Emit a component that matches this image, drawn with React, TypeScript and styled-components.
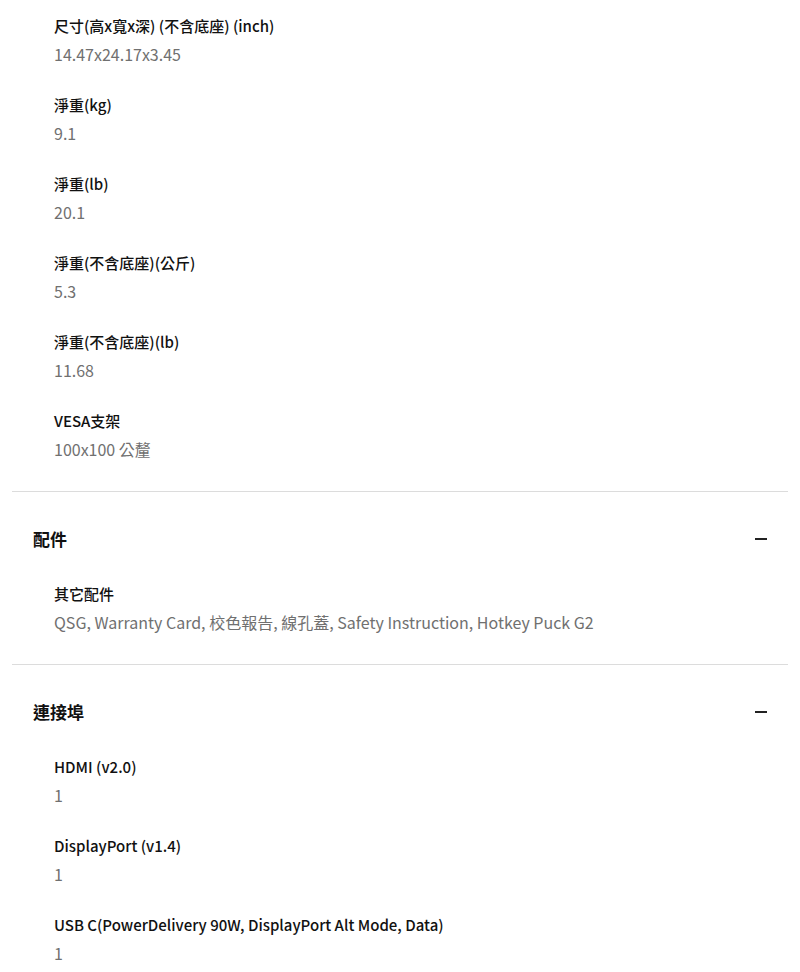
import React from "react";
import styled, { createGlobalStyle } from "styled-components";

const GlobalStyle = createGlobalStyle`
  body {
    margin: 0;
    background: #fff;
    font-family: "Noto Sans CJK TC", "Noto Sans", sans-serif;
  }
`;

const Page = styled.div`
  padding: 12px 12px 0;
`;

const Section = styled.section<{ $divider: boolean }>`
  border-top: ${(p) => (p.$divider ? "1px solid #dcdcdc" : "none")};
  padding-bottom: 28px;
`;

const SectionHeader = styled.div`
  display: flex;
  align-items: center;
  justify-content: space-between;
  padding: 33px 21px 0;
  height: 28px;
  box-sizing: content-box;
`;

const SectionTitle = styled.h3`
  margin: 0;
  font-size: 17px;
  line-height: 28px;
  font-weight: 700;
  color: #111;
`;

const Minus = styled.span`
  display: block;
  width: 12px;
  height: 2px;
  background: #222;
`;

const SpecList = styled.dl<{ $offset: boolean }>`
  display: flex;
  flex-direction: column;
  gap: 23px;
  margin: ${(p) => (p.$offset ? "27px" : "0")} 0 0;
  padding-left: 42px;
`;

const SpecItem = styled.div`
  display: flex;
  flex-direction: column;
`;

const SpecLabel = styled.dt`
  font-size: 15px;
  line-height: 28px;
  font-weight: 500;
  color: #111;
`;

const SpecValue = styled.dd`
  margin: 0;
  font-size: 16px;
  line-height: 28px;
  color: #707070;
`;

type Spec = { label: string; value: string };

const sections: { title?: string; specs: Spec[] }[] = [
  {
    specs: [
      { label: "尺寸(高x寬x深) (不含底座) (inch)", value: "14.47x24.17x3.45" },
      { label: "淨重(kg)", value: "9.1" },
      { label: "淨重(lb)", value: "20.1" },
      { label: "淨重(不含底座)(公斤)", value: "5.3" },
      { label: "淨重(不含底座)(lb)", value: "11.68" },
      { label: "VESA支架", value: "100x100 公釐" },
    ],
  },
  {
    title: "配件",
    specs: [
      {
        label: "其它配件",
        value: "QSG, Warranty Card, 校色報告, 線孔蓋, Safety Instruction, Hotkey Puck G2",
      },
    ],
  },
  {
    title: "連接埠",
    specs: [
      { label: "HDMI (v2.0)", value: "1" },
      { label: "DisplayPort (v1.4)", value: "1" },
      { label: "USB C(PowerDelivery 90W, DisplayPort Alt Mode, Data)", value: "1" },
    ],
  },
];

export default function App() {
  return (
    <>
      <GlobalStyle />
      <Page>
        {sections.map((section, i) => (
          <Section key={i} $divider={i > 0}>
            {section.title && (
              <SectionHeader>
                <SectionTitle>{section.title}</SectionTitle>
                <Minus />
              </SectionHeader>
            )}
            <SpecList $offset={!!section.title}>
              {section.specs.map((spec) => (
                <SpecItem key={spec.label}>
                  <SpecLabel>{spec.label}</SpecLabel>
                  <SpecValue>{spec.value}</SpecValue>
                </SpecItem>
              ))}
            </SpecList>
          </Section>
        ))}
      </Page>
    </>
  );
}
